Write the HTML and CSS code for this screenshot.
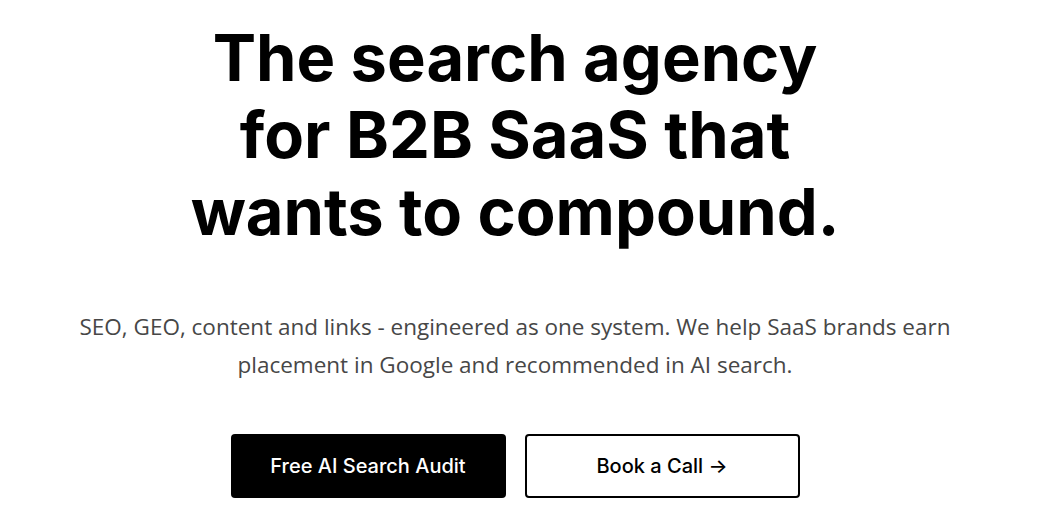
FILE: index.html
```html
<!DOCTYPE html>
<html lang="en">
<head>
<meta charset="UTF-8">
<meta name="viewport" content="width=device-width, initial-scale=1.0">
<title>Search agency for B2B SaaS</title>
<link rel="stylesheet" href="styles.css">
</head>
<body>
<section class="hero">
  <h1 class="hero-title">The search agency<br>for B2B SaaS that<br>wants to compound.</h1>
  <p class="hero-text">SEO, GEO, content and links - engineered as one system. We help SaaS brands earn placement in Google and recommended in AI search.</p>
  <div class="hero-actions">
    <a href="#" class="btn btn-dark">Free AI Search Audit</a>
    <a href="#" class="btn btn-light">Book a Call &rarr;</a>
  </div>
</section>
</body>
</html>
```

FILE: styles.css
```css
body {
  margin: 0;
  padding: 0;
  background-color: #fff;
  font-family: "Inter", "Liberation Sans", sans-serif;
}
.hero {
  display: flex;
  flex-direction: column;
  align-items: center;
  padding: 19px 7px 0 0;
}
.hero-title {
  margin: 0;
  font-size: 65px;
  line-height: 77px;
  font-weight: 700;
  color: #000;
  text-align: center;
  letter-spacing: 0;
}
.hero-text {
  margin: 58px 0 0;
  max-width: 900px;
  font-family: "Open Sans", sans-serif;
  font-size: 22.5px;
  line-height: 38px;
  color: #474747;
  text-align: center;
}
.hero-actions {
  display: flex;
  gap: 19px;
  margin-top: 50px;
}
.btn {
  display: flex;
  align-items: center;
  justify-content: center;
  box-sizing: border-box;
  width: 275px;
  height: 64px;
  border-radius: 4px;
  font-size: 20px;
  font-weight: 500;
  text-decoration: none;
}
.btn-dark {
  background-color: #000;
  color: #fff;
}
.btn-light {
  background-color: #fff;
  color: #000;
  border: 2px solid #000;
}
```
